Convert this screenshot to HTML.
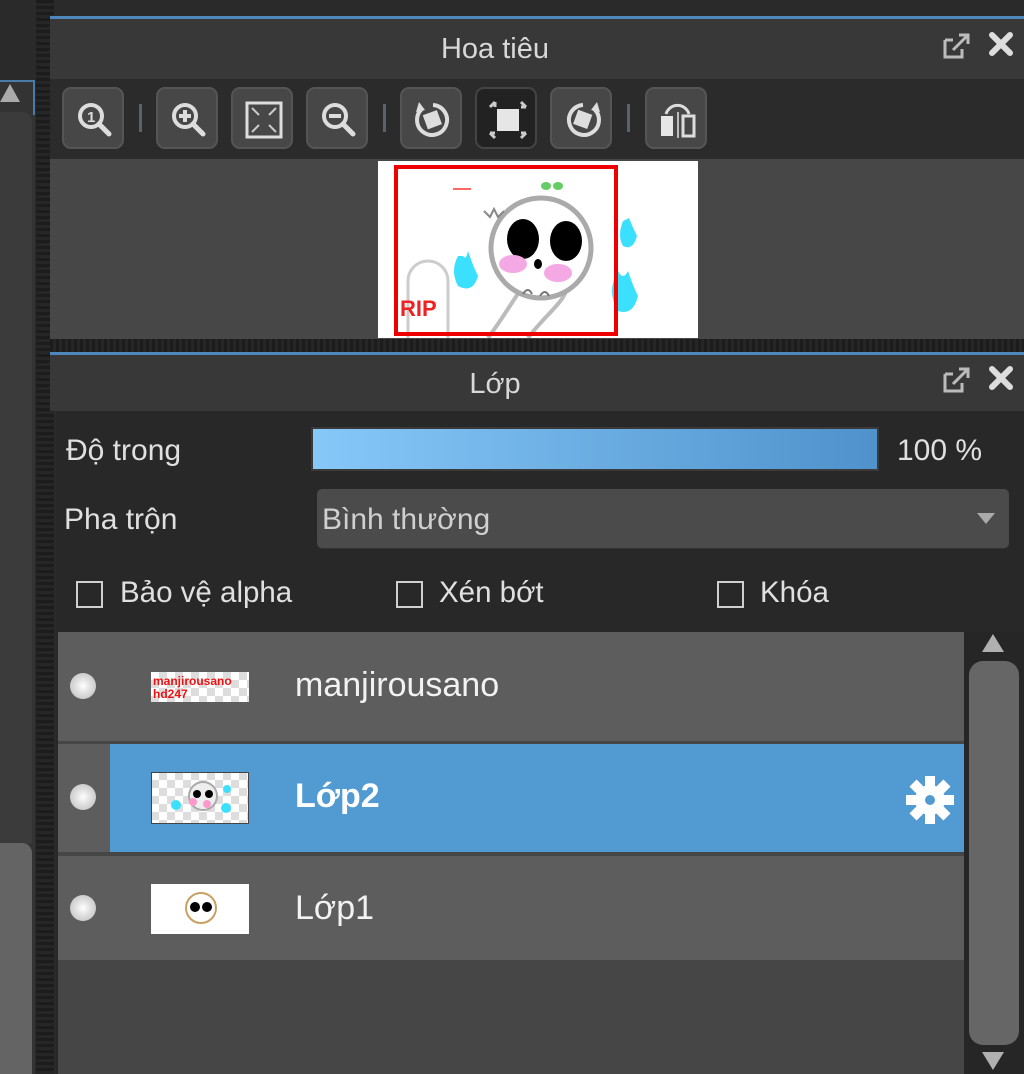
<!DOCTYPE html>
<html><head><meta charset="utf-8">
<style>
*{margin:0;padding:0;box-sizing:border-box}
body{width:1024px;height:1074px;background:#2a2a2a;position:relative;overflow:hidden;font-family:"Liberation Sans",sans-serif;color:#e6e6e6}
.a{position:absolute}
.btn{position:absolute;top:87px;width:62px;height:62px;background:#474747;border:2px solid #555;border-radius:9px}
.btn svg{position:absolute;left:9px;top:9px}
.sep{position:absolute;top:104px;width:3px;height:28px;background:#5a6270}
.dot{position:absolute;left:70px;width:26px;height:26px;border-radius:50%;background:radial-gradient(circle at 50% 50%,#fff 0,#e4e4e4 35%,#b8b8b8 100%)}
.row{position:absolute;left:58px;width:906px;background:#5d5d5d}
.name{position:absolute;left:295px;font-size:34px;color:#f2f2f2}
.cb{position:absolute;top:581px;width:27px;height:27px;border:2px solid #d0d0d0}
.cl{position:absolute;top:576px;font-size:29.5px;color:#e0e0e0}
</style></head><body>
<div class="a" style="left:0;top:0;width:1024px;height:16px;background:#2a2a2a"></div>
<div class="a" style="left:0;top:80px;width:35px;height:994px;background:#333"></div>
<div class="a" style="left:0;top:80px;width:35px;height:35px;border-top:2px solid #4a7aa8;border-right:2px solid #4a7aa8"></div>
<div class="a" style="left:0;top:84px;width:0;height:0;border-left:10px solid transparent;border-right:10px solid transparent;border-bottom:18px solid #aaa"></div>
<div class="a" style="left:0;top:112px;width:32px;height:732px;background:#3b3b3b;border-radius:0 10px 0 0"></div>
<div class="a" style="left:0;top:843px;width:32px;height:231px;background:#646464;border-radius:0 10px 0 0"></div>
<div class="a" style="left:36px;top:0;width:18px;height:1074px;background:repeating-linear-gradient(#1c1c1c 0 3px,#262626 3px 6px)"></div>

<div class="a" style="left:50px;top:16px;width:974px;height:3px;background:#4d87bb"></div>
<div class="a" style="left:50px;top:19px;width:974px;height:60px;background:#383838"></div>
<div class="a" style="left:50px;top:33px;width:890px;text-align:center;font-size:29px;color:#d8d8d8">Hoa tiêu</div>
<svg class="a" style="left:940px;top:30px" width="84" height="32" viewBox="0 0 84 32">
<path d="M5 10v17h17v-8" fill="none" stroke="#bbb" stroke-width="3"/><path d="M5 10h8" stroke="#bbb" stroke-width="3"/><path d="M13 20L27 6M19 5h9v9" fill="none" stroke="#bbb" stroke-width="3"/>
<path d="M52 5l18 18M70 5L52 23" stroke="#ddd" stroke-width="6" stroke-linecap="round"/></svg>
<div class="a" style="left:50px;top:79px;width:974px;height:80px;background:#2b2b2b"></div>
<div class="btn" style="left:62px"><svg width="44" height="44" viewBox="0 0 44 44"><circle cx="18" cy="18" r="11" fill="none" stroke="#ddd" stroke-width="4"/><path d="M26 26l10 10" stroke="#ddd" stroke-width="5" stroke-linecap="round"/><text x="14" y="24" font-size="15" font-weight="bold" fill="#ddd" font-family="Liberation Sans">1</text></svg></div>
<div class="sep" style="left:139px"></div>
<div class="btn" style="left:156px"><svg width="44" height="44" viewBox="0 0 44 44"><circle cx="18" cy="18" r="11" fill="none" stroke="#ddd" stroke-width="4"/><path d="M26 26l10 10" stroke="#ddd" stroke-width="5" stroke-linecap="round"/><path d="M12 18h12M18 12v12" stroke="#ddd" stroke-width="4"/></svg></div>
<div class="btn" style="left:231px"><svg width="44" height="44" viewBox="0 0 44 44"><rect x="5" y="5" width="34" height="34" fill="none" stroke="#ddd" stroke-width="3"/><path d="M10 10l7 7M34 10l-7 7M10 34l7-7M34 34l-7-7" stroke="#ccc" stroke-width="2"/></svg></div>
<div class="btn" style="left:306px"><svg width="44" height="44" viewBox="0 0 44 44"><circle cx="18" cy="18" r="11" fill="none" stroke="#ddd" stroke-width="4"/><path d="M26 26l10 10" stroke="#ddd" stroke-width="5" stroke-linecap="round"/><path d="M12 18h12" stroke="#ddd" stroke-width="4"/></svg></div>
<div class="sep" style="left:383px"></div>
<div class="btn" style="left:400px"><svg width="44" height="44" viewBox="0 0 44 44"><path d="M12 10A15 15 0 1 0 22 7" fill="none" stroke="#ddd" stroke-width="4"/><path d="M8 4l6 8-9 2z" fill="#ddd"/><rect x="14" y="14" width="15" height="15" fill="#ddd" transform="rotate(-20 22 22)"/></svg></div>
<div class="btn" style="left:475px;background:#222;border-color:#444"><svg width="44" height="44" viewBox="0 0 44 44"><rect x="11" y="11" width="22" height="22" fill="#e6e6e6"/><path d="M4 9l5-5M9 4v5M35 4l5 5M40 9h-5M4 35l5 5M4 35h5M40 35l-5 5M40 35h-5" stroke="#ccc" stroke-width="3"/></svg></div>
<div class="btn" style="left:550px"><svg width="44" height="44" viewBox="0 0 44 44"><path d="M32 10A15 15 0 1 1 22 7" fill="none" stroke="#ddd" stroke-width="4"/><path d="M36 4l-6 8 9 2z" fill="#ddd"/><rect x="14" y="14" width="15" height="15" fill="#ddd" transform="rotate(20 22 22)"/></svg></div>
<div class="sep" style="left:627px"></div>
<div class="btn" style="left:645px"><svg width="44" height="44" viewBox="0 0 44 44"><rect x="5" y="18" width="12" height="20" fill="#e6e6e6"/><rect x="27" y="18" width="11" height="20" fill="none" stroke="#ddd" stroke-width="3"/><path d="M10 16A12 12 0 0 1 33 16" fill="none" stroke="#ddd" stroke-width="3"/><path d="M22 14v26" stroke="#bbb" stroke-width="2"/></svg></div>
<div class="a" style="left:50px;top:159px;width:974px;height:182px;background:#474747"></div>
<svg class="a" style="left:378px;top:161px" width="320" height="177" viewBox="0 0 320 177">
<rect width="320" height="177" fill="#fff"/>
<path d="M30 177V120a20 20 0 0 1 40 0V177" fill="none" stroke="#ccc" stroke-width="3"/>
<text x="22" y="155" font-size="22" font-weight="bold" fill="#e22" font-family="Liberation Sans">RIP</text>
<path d="M110 177C130 150 140 130 150 120M150 177C170 150 190 140 190 120" fill="none" stroke="#bbb" stroke-width="4"/>
<circle cx="163" cy="87" r="50" fill="#fff" stroke="#aaa" stroke-width="5"/>
<ellipse cx="145" cy="78" rx="16" ry="20" fill="#000"/><ellipse cx="188" cy="80" rx="16" ry="20" fill="#000"/>
<ellipse cx="160" cy="103" rx="4" ry="5" fill="#000"/>
<ellipse cx="135" cy="103" rx="14" ry="9" fill="#f4a8e4"/><ellipse cx="180" cy="112" rx="14" ry="9" fill="#f4a8e4"/>
<path d="M145 133q5-8 9 0M162 135q5-8 9 0" fill="none" stroke="#777" stroke-width="2"/>
<path d="M106 50l6 6 4-8 4 8 6-6" fill="none" stroke="#888" stroke-width="2"/>
<ellipse cx="168" cy="25" rx="5" ry="4" fill="#6c6"/><ellipse cx="180" cy="25" rx="5" ry="4" fill="#6c6"/>
<path d="M80 95q-8 15 0 30q15 8 20-10q-5-10-10-25q-2 10-5 5z" fill="#3ce0ff"/>
<path d="M240 110q-12 20 0 40q15 5 20-15q-5-10-10-25q-5 10-10 0z" fill="#3ce0ff"/>
<path d="M245 60q-6 15 0 25q10 5 14-10q-4-8-8-18z" fill="#3ce0ff"/>
<path d="M75 28h18" stroke="#f66" stroke-width="2"/>
<rect x="18" y="6" width="220" height="167" fill="none" stroke="#e00" stroke-width="4"/>
</svg>
<div class="a" style="left:50px;top:339px;width:974px;height:13px;background:repeating-linear-gradient(90deg,#1c1c1c 0 3px,#262626 3px 6px)"></div>

<div class="a" style="left:50px;top:352px;width:974px;height:3px;background:#4d87bb"></div>
<div class="a" style="left:50px;top:355px;width:974px;height:56px;background:#383838"></div>
<div class="a" style="left:50px;top:368px;width:890px;text-align:center;font-size:29px;color:#d8d8d8">Lớp</div>
<svg class="a" style="left:940px;top:364px" width="84" height="32" viewBox="0 0 84 32">
<path d="M5 10v17h17v-8" fill="none" stroke="#bbb" stroke-width="3"/><path d="M5 10h8" stroke="#bbb" stroke-width="3"/><path d="M13 20L27 6M19 5h9v9" fill="none" stroke="#bbb" stroke-width="3"/>
<path d="M52 5l18 18M70 5L52 23" stroke="#ddd" stroke-width="6" stroke-linecap="round"/></svg>
<div class="a" style="left:56px;top:411px;width:968px;height:663px;background:#282828"></div>
<div class="a" style="left:66px;top:434px;font-size:30px;color:#e0e0e0">Độ trong</div>
<div class="a" style="left:311px;top:427px;width:568px;height:44px;background:linear-gradient(90deg,#86c8f8,#4f92cc);border:2px solid #3a3a3a"></div>
<div class="a" style="left:897px;top:434px;font-size:30px;color:#e0e0e0">100 %</div>
<div class="a" style="left:64px;top:503px;font-size:30px;color:#e0e0e0">Pha trộn</div>
<div class="a" style="left:317px;top:489px;width:692px;height:59px;background:#4b4b4b;border-radius:5px;box-shadow:0 1px 0 #333"></div>
<div class="a" style="left:322px;top:503px;font-size:30px;color:#d0d0d0">Bình thường</div>
<div class="a" style="left:977px;top:513px;width:0;height:0;border-left:9px solid transparent;border-right:9px solid transparent;border-top:11px solid #aaa"></div>
<div class="cb" style="left:76px"></div><div class="cl" style="left:120px">Bảo vệ alpha</div>
<div class="cb" style="left:396px"></div><div class="cl" style="left:439px">Xén bớt</div>
<div class="cb" style="left:717px"></div><div class="cl" style="left:760px">Khóa</div>

<div class="a" style="left:58px;top:632px;width:910px;height:442px;background:#464646"></div>
<div class="row" style="top:632px;height:109px"></div>
<div class="row" style="top:744px;height:108px;background:#5d5d5d"></div>
<div class="a" style="left:110px;top:744px;width:854px;height:108px;background:#529bd2"></div>
<div class="row" style="top:856px;height:104px"></div>
<div class="dot" style="top:673px"></div>
<div class="dot" style="top:784px"></div>
<div class="dot" style="top:895px"></div>
<svg class="a" style="left:151px;top:672px" width="98" height="30" viewBox="0 0 98 30"><rect width="98" height="30" fill="#ddd"/><rect width="98" height="30" fill="url(#ck)"/>
<defs><pattern id="ck" width="16" height="16" patternUnits="userSpaceOnUse"><rect width="8" height="8" fill="#fff"/><rect x="8" y="8" width="8" height="8" fill="#fff"/></pattern></defs>
<text x="2" y="13" font-size="12" fill="#e11" font-family="Liberation Sans" font-weight="bold">manjirousano</text><text x="2" y="26" font-size="12" fill="#e11" font-family="Liberation Sans" font-weight="bold">hd247</text></svg>
<svg class="a" style="left:151px;top:772px" width="98" height="52" viewBox="0 0 98 52"><rect width="98" height="52" fill="#ddd" stroke="#444" stroke-width="2"/><rect x="1" y="1" width="96" height="50" fill="url(#ck)"/>
<circle cx="52" cy="24" r="14" fill="#eee" stroke="#aaa" stroke-width="2"/><circle cx="46" cy="22" r="4" fill="#000"/><circle cx="58" cy="22" r="4" fill="#000"/><circle cx="42" cy="30" r="4" fill="#f9c"/><circle cx="56" cy="32" r="4" fill="#f9c"/><circle cx="25" cy="33" r="5" fill="#3ce0ff"/><circle cx="75" cy="36" r="5" fill="#3ce0ff"/><circle cx="76" cy="17" r="4" fill="#3ce0ff"/></svg>
<svg class="a" style="left:151px;top:884px" width="98" height="50" viewBox="0 0 98 50"><rect width="98" height="50" fill="#fff"/><circle cx="50" cy="24" r="15" fill="#fff" stroke="#c9a060" stroke-width="2"/><circle cx="44" cy="23" r="5" fill="#000"/><circle cx="56" cy="23" r="5" fill="#000"/></svg>
<div class="name" style="top:666px">manjirousano</div>
<div class="name" style="top:777px;font-weight:bold;color:#fff">Lớp2</div>
<div class="name" style="top:889px">Lớp1</div>
<svg class="a" style="left:904px;top:774px" width="52" height="52" viewBox="0 0 52 52"><g fill="#fff"><circle cx="26" cy="26" r="15"/><rect x="21" y="2" width="10" height="48"/><rect x="2" y="21" width="48" height="10"/><rect x="21" y="2" width="10" height="48" transform="rotate(45 26 26)"/><rect x="21" y="2" width="10" height="48" transform="rotate(-45 26 26)"/></g><circle cx="26" cy="26" r="5" fill="#529bd2"/></svg>
<div class="a" style="left:964px;top:632px;width:60px;height:442px;background:#262626"></div>
<div class="a" style="left:982px;top:634px;width:0;height:0;border-left:11px solid transparent;border-right:11px solid transparent;border-bottom:18px solid #b0b0b0"></div>
<div class="a" style="left:969px;top:661px;width:50px;height:384px;background:#666;border-radius:14px"></div>
<div class="a" style="left:982px;top:1052px;width:0;height:0;border-left:11px solid transparent;border-right:11px solid transparent;border-top:18px solid #b0b0b0"></div>
</body></html>
